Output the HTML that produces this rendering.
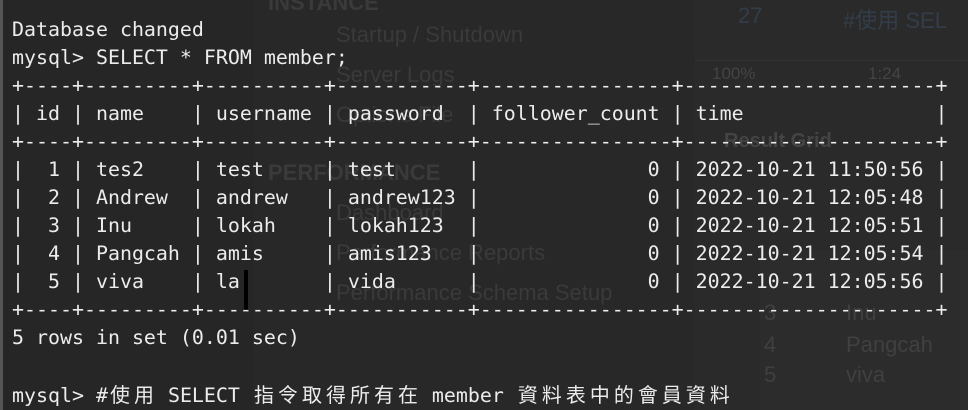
<!DOCTYPE html>
<html><head><meta charset="utf-8"><style>
html,body{margin:0;padding:0;width:968px;height:410px;overflow:hidden;background:#262626;}
.bg{position:absolute;inset:0;}
.g{position:absolute;color:#3a3a3a;font-family:"Liberation Sans",sans-serif;font-size:22px;white-space:nowrap;}
pre{position:absolute;left:12px;top:16px;margin:0;font-family:"DejaVu Sans Mono","Liberation Mono","Noto Sans CJK TC",monospace;font-size:19.93px;line-height:28px;color:#ececec;white-space:pre;}
.c{display:inline-block;width:24px;text-align:center;font-family:"Noto Sans CJK TC",sans-serif;}
</style></head><body>
<div class="bg">
<div style="position:absolute;left:0;top:0;width:3px;height:410px;background:#555"></div>
<div style="position:absolute;left:253px;top:0;width:442px;height:410px;background:#282828"></div>
<div style="position:absolute;left:695px;top:0;width:273px;height:410px;background:#2a2a2a"></div>
<div style="position:absolute;left:695px;top:60px;width:273px;height:1px;background:#333"></div>
<div style="position:absolute;left:760px;top:250px;width:208px;height:160px;background:#2c2c2c"></div>
<div class="g" style="left:268px;top:-10px;font-weight:bold">INSTANCE</div>
<div class="g" style="left:336px;top:22px">Startup / Shutdown</div>
<div class="g" style="left:336px;top:62px">Server Logs</div>
<div class="g" style="left:336px;top:102px">Options File</div>
<div class="g" style="left:268px;top:160px;font-weight:bold">PERFORMANCE</div>
<div class="g" style="left:336px;top:200px">Dashboard</div>
<div class="g" style="left:336px;top:240px">Performance Reports</div>
<div class="g" style="left:336px;top:280px">Performance Schema Setup</div>
<div class="g" style="left:738px;top:3px;color:#333d4a">27</div>
<div class="g" style="left:843px;top:3px;color:#333d4a">#使用 SEL</div>
<div class="g" style="left:712px;top:64px;font-size:17px;color:#444">100%</div>
<div class="g" style="left:868px;top:64px;font-size:17px;color:#444">1:24</div>
<div class="g" style="left:724px;top:130px;font-size:20px;font-weight:bold;color:#444">Result Grid</div>
<div class="g" style="left:764px;top:300px;color:#404040">3</div>
<div class="g" style="left:846px;top:300px;color:#404040">Inu</div>
<div class="g" style="left:764px;top:332px;color:#404040">4</div>
<div class="g" style="left:846px;top:332px;color:#404040">Pangcah</div>
<div class="g" style="left:764px;top:362px;color:#404040">5</div>
<div class="g" style="left:846px;top:362px;color:#404040">viva</div>
<div style="position:absolute;left:244px;top:270px;width:4px;height:42px;background:#000"></div>
</div>
<pre>Database changed
mysql&gt; SELECT * FROM member;
+----+---------+----------+-----------+----------------+---------------------+
| id | name    | username | password  | follower_count | time                |
+----+---------+----------+-----------+----------------+---------------------+
|  1 | tes2    | test     | test      |              0 | 2022-10-21 11:50:56 |
|  2 | Andrew  | andrew   | andrew123 |              0 | 2022-10-21 12:05:48 |
|  3 | Inu     | lokah    | lokah123  |              0 | 2022-10-21 12:05:51 |
|  4 | Pangcah | amis     | amis123   |              0 | 2022-10-21 12:05:54 |
|  5 | viva    | la       | vida      |              0 | 2022-10-21 12:05:56 |
+----+---------+----------+-----------+----------------+---------------------+
5 rows in set (0.01 sec)

mysql&gt; #<span class="c">使</span><span class="c">用</span> SELECT <span class="c">指</span><span class="c">令</span><span class="c">取</span><span class="c">得</span><span class="c">所</span><span class="c">有</span><span class="c">在</span> member <span class="c">資</span><span class="c">料</span><span class="c">表</span><span class="c">中</span><span class="c">的</span><span class="c">會</span><span class="c">員</span><span class="c">資</span><span class="c">料</span></pre>
</body></html>
